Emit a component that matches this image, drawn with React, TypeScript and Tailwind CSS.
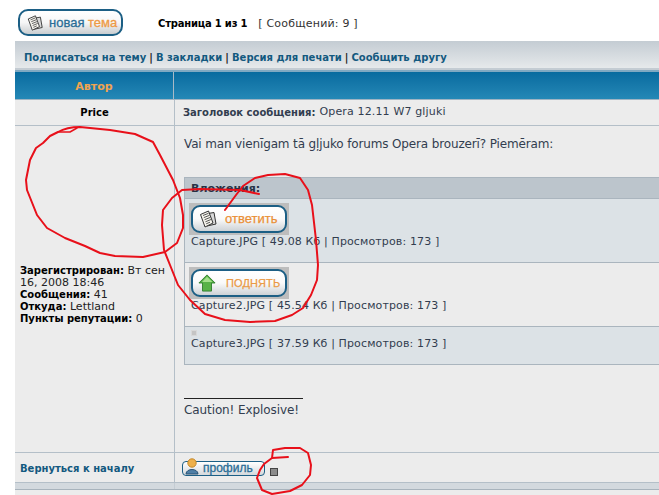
const verdana = "font-['DejaVu_Sans',Verdana,sans-serif]";
const arial = "font-['Liberation_Sans',Arial,sans-serif]";

function DocIcon({ size = 20 }: { size?: number }) {
  return (
    <svg width={size} height={size} viewBox="0 0 20 20" fill="none" className="shrink-0">
      <path d="M7 5 L16 3.5 L18 15 L9 17 Z" fill="#d9d9d9" stroke="#333" strokeWidth="1" />
      <path d="M2.5 5.5 L10.5 2 L15 14 L7 18 Z" fill="#f7f5ee" stroke="#333" strokeWidth="1" />
      <path d="M5 6.5 L10.5 4.3 M5.8 8.6 L11.5 6.3 M6.6 10.7 L12.3 8.4 M7.4 12.8 L13 10.5 M8.2 14.8 L12 13.2" stroke="#444" strokeWidth="0.9" />
    </svg>
  );
}

function ArrowIcon() {
  return (
    <svg width="18" height="18" viewBox="0 0 20 20" className="shrink-0">
      <path d="M10 1 L19 10 L15 10 L15 19 L5 19 L5 10 L1 10 Z" fill="#58b247" stroke="#2f7d2c" strokeWidth="1" />
      <path d="M10 3 L16 9 L4.5 9 Z" fill="#a5e08c" />
    </svg>
  );
}

function PillButton({ icon, label }: { icon: React.ReactNode; label: React.ReactNode }) {
  return (
    <div className="-ml-[2px] w-[100px] h-[32px] bg-[#bdbdbd] p-[2px] flex">
      <div className={`flex-1 rounded-[9px] border-2 border-[#1c5f85] bg-gradient-to-b from-white via-[#fafafa] to-[#cdd2d6] flex items-center pl-[5px] [-webkit-text-stroke:0.25px_currentColor] ${arial}`}>
        {icon}
        {label}
      </div>
    </div>
  );
}

function Attachment({ name, meta, tone, height, children }: { name: string; meta: string; tone: string; height: string; children: React.ReactNode }) {
  return (
    <div className={`${tone} ${height} border-b border-[#aab5be] pl-[6px] flex flex-col`}>
      {children}
      <div className="text-[11px] leading-[13px] tracking-[0.13px] text-[#323d4f] whitespace-nowrap">
        {name} [ {meta} | Просмотров: 173 ]
      </div>
    </div>
  );
}

export default function App() {
  return (
    <div className={`relative h-[495px] w-[659px] overflow-hidden bg-white ${verdana}`}>
      <div className="h-[41px] flex items-start pl-[18px] pt-[9px]">
        <div className={`w-[105px] h-[27px] rounded-[10px] border-2 border-[#1c5f85] bg-gradient-to-b from-white via-[#f6f6f6] to-[#c9cdd0] flex items-center pl-[6px] gap-[5px] text-[13px] ${arial}`}>
          <DocIcon size={18} />
          <span className="text-[#2a6d96] [-webkit-text-stroke:0.3px_currentColor]">новая <span className="text-[#ee9a45]">тема</span></span>
        </div>
        <div className="ml-[35px] mt-[8px] text-[10px] leading-[14px] whitespace-nowrap flex items-baseline">
          <b className="text-black tracking-[-0.2px]">Страница 1 из 1</b>
          <span className="ml-[11px] text-[11px] tracking-[0.2px] text-[#333]">[ Сообщений: 9 ]</span>
        </div>
      </div>

      <div className="ml-[15px]">
        <div className="h-[27px] bg-gradient-to-b from-[#c4ccd3] to-[#e6e9eb] pl-[9px] pt-[5px] flex items-center text-[10px] font-bold text-[#13597f] whitespace-nowrap">
          Подписаться на тему <span className="text-[#222] mx-[3px]">|</span> В закладки <span className="text-[#222] mx-[3px]">|</span> Версия для печати <span className="text-[#222] mx-[3px]">|</span> Сообщить другу
        </div>
        <div className="h-[4px] bg-gradient-to-b from-[#c4ccd3] from-50% to-[#7fa9c2] to-50%" />

        <div className="grid grid-cols-[159px_1fr] h-[28px] bg-gradient-to-b from-[#076b9f] to-[#2488b6] border-b border-[#9fb4c3]">
          <div className="border-r border-[#a9bac6] flex items-center justify-center pt-[3px] text-[11px] font-bold text-[#f0a450]">Автор</div>
          <div />
        </div>

        <div className="grid grid-cols-[160px_1fr] h-[26px] bg-[#ececec] border-b border-[#b4bfc8] text-[10px]">
          <div className="border-r border-[#b4bfc8] flex items-center justify-center font-bold text-black">Price</div>
          <div className="flex items-center pl-[8px] text-[#323d4f]">
            <b>Заголовок сообщения:</b>
            <span className="ml-[4px] text-[11px] tracking-[0.15px]">Opera 12.11 W7 gljuki</span>
          </div>
        </div>

        <div className="grid grid-cols-[160px_1fr] h-[327px] border-b border-[#b4bfc8] bg-[#ececec]">
          <div className="border-r border-[#b4bfc8] pl-[5px] pr-[4px] pt-[139px] text-[11px] leading-[12px] text-[#222]">
            <b className="text-black text-[10px]">Зарегистрирован:</b> Вт сен 16, 2008 18:46
            <br />
            <b className="text-black text-[10px]">Сообщения:</b> 41
            <br />
            <b className="text-black text-[10px]">Откуда:</b> Lettland
            <br />
            <b className="text-black text-[10px]">Пункты репутации:</b> 0
          </div>
          <div className="pl-[9px] pt-[10px] text-[#323d4f] min-w-0">
            <div className="text-[12px] leading-[16px] tracking-[-0.14px] whitespace-nowrap">Vai man vienīgam tā gļjuko forums Opera brouzerī? Piemēram:</div>
            <div className="mt-[25px] border-l border-t border-[#aab5be]">
              <div className="h-[21px] bg-[#bcc5cc] border-b border-[#aab5be] pl-[6px] pt-[2px] flex items-center text-[11px] font-bold text-[#263245]">Вложения:</div>
              <Attachment name="Capture.JPG" meta="49.08 Кб" tone="bg-[#dce2e6]" height="h-[64px]">
                <div className="mt-[4px]">
                  <PillButton icon={<DocIcon />} label={<span className="ml-[7px] text-[13px] text-[#ea8f35]">ответить</span>} />
                </div>
              </Attachment>
              <Attachment name="Capture2.JPG" meta="45.54 Кб" tone="bg-[#ececec]" height="h-[64px]">
                <div className="mt-[4px]">
                  <PillButton icon={<ArrowIcon />} label={<span className="ml-[10px] text-[11px] tracking-[0.1px] text-[#ea9a45]">ПОДНЯТЬ</span>} />
                </div>
              </Attachment>
              <Attachment name="Capture3.JPG" meta="37.59 Кб" tone="bg-[#dce2e6]" height="h-[38px]">
                <div className="mt-[3px] mb-[1px] w-[6px] h-[6px] bg-[#c4c4c4] border border-[#d8d8d8]" />
              </Attachment>
            </div>
            <div className="mt-[33px] w-[119px] border-t border-[#222]" />
            <div className="text-[12px] leading-[16px] tracking-[-0.1px] mt-[3px]">Caution! Explosive!</div>
          </div>
        </div>

        <div className="grid grid-cols-[160px_1fr] h-[30px] bg-[#ececec] border-b border-[#b4bfc8]">
          <div className="border-r border-[#b4bfc8] pl-[5px] pt-[2px] flex items-center text-[10px] font-bold text-[#13597f]">Вернуться к началу</div>
          <div className="pl-[7px] pt-[1px] flex items-center">
            <div className={`relative w-[83px] h-[15px] rounded-[4px] border border-[#1c5f85] bg-gradient-to-b from-white to-[#d5d9dc] pl-[20px] flex items-center text-[12px] text-[#2a6d96] [-webkit-text-stroke:0.3px_currentColor] ${arial}`}>
              профиль
              <svg width="14" height="17" viewBox="0 0 14 17" className="absolute left-[2px] -top-[4px]">
                <circle cx="7" cy="5" r="4.2" fill="#eeb04a" stroke="#c48a2c" />
                <path d="M1 16 C1 10 13 10 13 16 Z" fill="#4f7fa6" stroke="#2b5475" />
              </svg>
            </div>
            <div className="ml-[5px] mt-[7px] w-[8px] h-[8px] bg-[#8c8c8c] border border-[#444]" />
          </div>
        </div>

        <div className="grid grid-cols-[160px_1fr] h-[7px] bg-[#d3d9de] border-b border-[#a8b3bc]">
          <div className="border-r border-[#c4ccd3]" />
        </div>
        <div className="h-[10px] bg-[#ececec]" />
      </div>

      <svg className="absolute inset-0 pointer-events-none" width="659" height="495" fill="none" stroke="#e8101a" strokeWidth="2" strokeLinejoin="round" strokeLinecap="round">
        <path d="M58 132 C65 128 72 127 80 127 L110 130 L135 134 L153 142 L160 155 L173 180 L180 198 L183 215 L183 228 L177 243 L165 252 L143 257 L115 256 L100 253 L85 246 L65 238 L47 228 L37 215 L27 190 L26 180 L30 160 L36 148 L43 143 L50 136 Z" />
        <path d="M58 132 L70 132 L77 128" strokeWidth="1.5" />
        <path d="M259 194 L240 190 L200 189 L182 190 L172 198 L163 210 L162 225 L164 250 L170 265 L178 285 L190 300 L205 314 L225 320 L250 322 L275 321 L292 315 L303 308 L311 295 L317 280 L318 265 L316 240 L312 205 L308 190 L300 178 L285 174 L268 175 L255 178 L243 186 L236 195 L225 210" />
        <path d="M288 457 L272 458 L273 450 L285 448 L300 448 L308 453 L311 465 L310 475 L302 485 L290 491 L272 494 L262 490 L257 478 L260 470 L264 464 L272 458" />
      </svg>
    </div>
  );
}
